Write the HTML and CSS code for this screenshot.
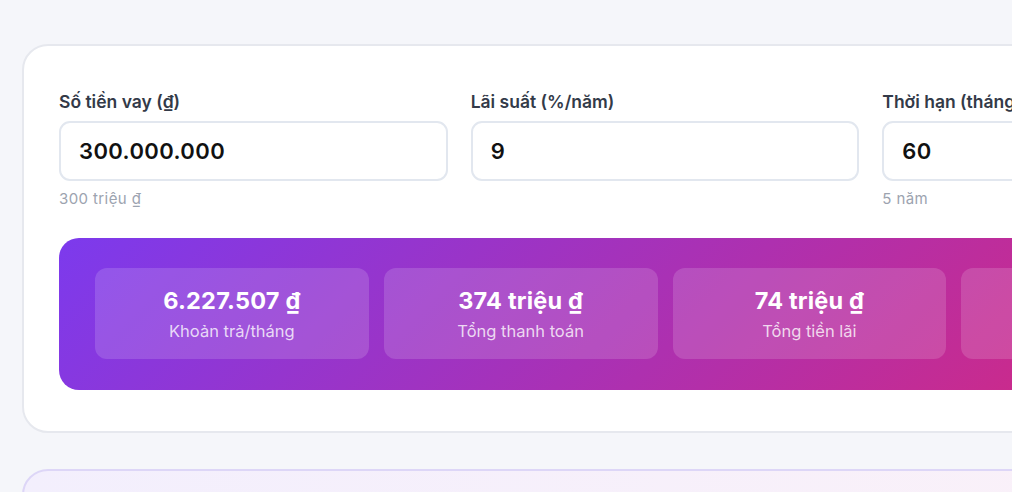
FILE: index.html
```html
<!DOCTYPE html>
<html lang="vi">
  <head>
    <meta charset="UTF-8" />
    <meta name="viewport" content="width=device-width, initial-scale=1.0" />
    <title>Tính lãi vay</title>
    <link rel="stylesheet" href="styles.css">
  </head>
  <body>
    <main class="page">
      <!-- Loan inputs -->
      <section class="calc-card">
        <div class="fields">
          <div class="field">
            <label for="amount">Số tiền vay (₫)</label>
            <input type="text" id="amount" value="300.000.000" />
            <p class="hint">300 triệu ₫</p>
          </div>
          <div class="field">
            <label for="rate">Lãi suất (%/năm)</label>
            <input type="text" id="rate" value="9" />
          </div>
          <div class="field">
            <label for="term">Thời hạn (tháng)</label>
            <input type="text" id="term" value="60" />
            <p class="hint">5 năm</p>
          </div>
        </div>

        <!-- Results -->
        <div class="results">
          <div class="stat">
            <strong>6.227.507 ₫</strong>
            <span>Khoản trả/tháng</span>
          </div>
          <div class="stat">
            <strong>374 triệu ₫</strong>
            <span>Tổng thanh toán</span>
          </div>
          <div class="stat">
            <strong>74 triệu ₫</strong>
            <span>Tổng tiền lãi</span>
          </div>
          <div class="stat">
            <strong>24,5%</strong>
            <span>Lãi / gốc</span>
          </div>
        </div>
      </section>

      <section class="next-card"></section>
    </main>
  </body>
</html>
```

FILE: styles.css
```css
body {
  font-family: "Inter", "Noto Sans", sans-serif;
  background-color: #f5f6fa;
  margin: 0;
  padding: 0;
  overflow: hidden;
}

.page {
  width: 1286px;
  padding: 44px 0 0 22px;
}

.calc-card {
  background-color: white;
  border: 2px solid #e6e8ee;
  border-radius: 26px;
  padding: 45px 35px 41px 35px;
}

.fields {
  display: grid;
  grid-template-columns: repeat(3, 1fr);
  gap: 23px;
}

.field label {
  display: block;
  font-size: 17.5px;
  font-weight: 600;
  color: #333a48;
  margin-bottom: 9px;
}

.field input {
  box-sizing: border-box;
  width: 100%;
  height: 60px;
  padding: 0 18px;
  font-family: inherit;
  font-size: 22px;
  font-weight: 600;
  letter-spacing: 0.4px;
  color: #111;
  border: 2px solid #e2e7ef;
  border-radius: 11px;
  outline: none;
}

.hint {
  margin: 8px 0 0;
  font-size: 15px;
  letter-spacing: 0.4px;
  color: #9ca3af;
}

/* Gradient results panel */
.results {
  margin-top: 30px;
  display: grid;
  grid-template-columns: repeat(4, 1fr);
  gap: 15px;
  padding: 30px 36px 31px;
  border-radius: 20px;
  background: linear-gradient(135deg, #7c3aed, #db2777);
}

.stat {
  display: flex;
  flex-direction: column;
  align-items: center;
  justify-content: center;
  height: 91px;
  border-radius: 12px;
  background-color: rgba(255, 255, 255, 0.15);
  color: white;
}

.stat strong {
  font-size: 23.5px;
  font-weight: 700;
  letter-spacing: 0.2px;
}

.stat span {
  margin-top: 6px;
  font-size: 16.5px;
  color: rgba(255, 255, 255, 0.78);
}

.next-card {
  margin-top: 36px;
  height: 120px;
  border: 2px solid #ddd6f7;
  border-radius: 26px;
  background: linear-gradient(90deg, #f3effd, #fbf1f8);
}
```
